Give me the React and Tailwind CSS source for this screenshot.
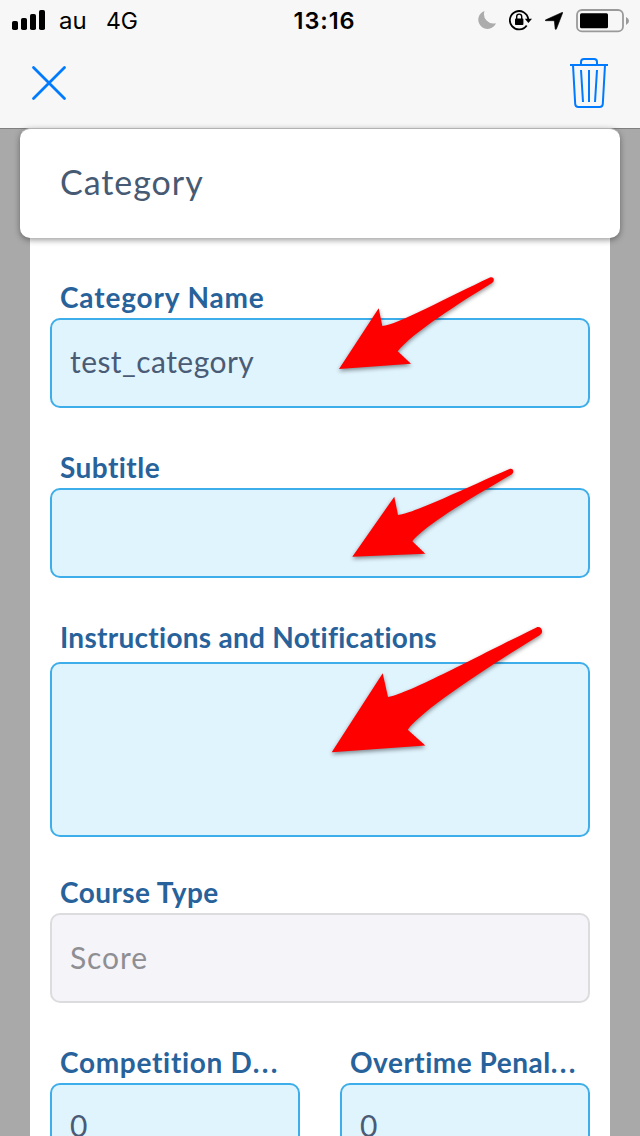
import React from "react";
import clsx from "clsx";

const ARROWS = [
  "M339 369L378.7 308.3L382.3 326C396 325.5 450 296 490 277.5C493.5 276 495.5 280.5 492 283C461 302 412 333 397.7 351.3L411 363.7Z",
  "M352.3 556.7L394.3 496.7L398 515C412 514 468 487 509.5 469C513 467.5 515 472 511.5 474.5C480 493 427 523 412.3 541.3L425.3 553.7Z",
  "M331.7 752.3L382.7 673.3L388 697C406 695 478 656 536.5 627.5C541 625.5 544.5 632 540 635C498 661 425 707 407.7 729.7L425.3 745.5Z",
];

function StatusBar() {
  return (
    <div className="flex h-10 items-center pl-3 pr-[10px] text-black font-['Inter',sans-serif]">
      <div className="flex flex-1 items-center">
        <svg className="block" width="34" height="20" viewBox="0 0 34 20">
          <rect x="0" y="11" width="6" height="9" rx="1.8" />
          <rect x="9" y="8" width="6" height="12" rx="1.8" />
          <rect x="18" y="4" width="6" height="16" rx="1.8" />
          <rect x="27" y="0" width="6" height="20" rx="1.8" />
        </svg>
        <span className="ml-[13px] w-[47px] pt-px text-[24px] leading-10">au</span>
        <span className="pt-px text-[23px] leading-10 tracking-[-0.2px]">4G</span>
      </div>
      <div className="pt-px pl-[7px] text-[23.5px] leading-10 font-semibold tracking-[0.9px]">13:16</div>
      <div className="flex flex-1 items-center justify-end">
        {/* do not disturb */}
        <svg className="mr-[13px]" width="18" height="18" viewBox="0 0 18 18">
          <path d="M6.5 0A9.2 9.2 0 1 0 18 12.2A9.5 9.5 0 0 1 6.5 0Z" fill="#acacac" />
        </svg>
        {/* rotation lock */}
        <svg className="mr-[13px]" width="23" height="22" viewBox="0 0 23 22">
          <path d="M17.7 16.4A9.2 9.2 0 1 1 19.2 10" fill="none" stroke="#000" strokeWidth="1.8" />
          <path d="M15.8 9.8H23L19.4 14Z" />
          <rect x="6" y="9.6" width="8.4" height="6.4" rx="0.8" />
          <path d="M7.7 10V7.6a2.5 2.5 0 0 1 5 0V10" fill="none" stroke="#000" strokeWidth="1.4" />
        </svg>
        {/* location */}
        <svg className="mr-[13px] mt-[2px]" width="18" height="18" viewBox="0 0 18 18">
          <path
            d="M17.1 0.4Q18 0 17.6 1L11.4 17Q10.7 18.2 10.2 17L9.4 9.6Q9.3 8.8 8.5 8.7L0.8 8.7Q-0.4 8.5 0.8 7.8Z"
            stroke="#000"
            strokeWidth="0.6"
          />
        </svg>
        {/* battery */}
        <svg className="mt-px" width="54" height="24" viewBox="0 0 54 24">
          <rect x="1" y="1" width="46" height="21.4" rx="5" fill="none" stroke="#9a9a9a" strokeWidth="1.8" />
          <rect x="4" y="4.2" width="28" height="15" rx="1.5" />
          <path d="M50 8Q53 9.5 53 12T50 16Z" fill="#9a9a9a" />
        </svg>
      </div>
    </div>
  );
}

function NavBar() {
  return (
    <div className="flex h-[88px] items-center justify-between pl-[31px] pr-8">
      <svg className="-mt-[2px]" width="36" height="36" viewBox="0 0 36 36">
        <path d="M2.5 2.5L33.5 33.5M33.5 2.5L2.5 33.5" stroke="#007aff" strokeWidth="2.8" strokeLinecap="round" />
      </svg>
      <svg className="-mt-1" width="38" height="52" viewBox="0 0 38 52" fill="none" stroke="#007aff" strokeWidth="2">
        <path d="M0 9H38" />
        <path d="M11 9V6Q11 3 14 3H24Q27 3 27 6V9" />
        <path d="M3 9L5.2 48Q5.4 51 8.5 51H29.5Q32.6 51 32.8 48L35 9" />
        <path d="M11 14L13 46M19 14V46M27 14L25 46" />
      </svg>
    </div>
  );
}

function Field({ label, value, labelClass, valueClass, className, disabled }) {
  return (
    <div className="min-w-0">
      <div
        className={clsx(
          "h-10 whitespace-nowrap pl-[10px] text-[28px] leading-[38px] font-bold text-[#28629b]",
          labelClass
        )}
      >
        {label}
      </div>
      <div
        className={clsx(
          "rounded-[10px] border-2 px-[18px] text-[30px]",
          disabled ? "border-[#dcdcdf] bg-[#f4f4f9] text-[#8e8e93]" : "border-[#3daee9] bg-[#e0f4fe] text-[#4a5b75]",
          valueClass,
          className || "h-[90px]"
        )}
      >
        {value}
      </div>
    </div>
  );
}

export default function App() {
  return (
    <div className="relative h-[1136px] w-[640px] overflow-hidden bg-[#a9a9a9] font-['Lato',sans-serif]">
      <header className="h-[129px] border-b border-[#808080] bg-[#f7f7f7]">
        <StatusBar />
        <NavBar />
      </header>

      <div className="relative z-10 mx-5 -mt-px flex h-[110px] items-center rounded-[10px] border-t border-[#b2b2b2] bg-white pl-10 pb-[3px] shadow-[0_2px_6px_rgba(0,0,0,0.4)]">
        <h1 className="text-[34px] leading-[40px] tracking-[0.95px] text-[#475a73]">Category</h1>
      </div>

      <main className="mx-[30px] flex h-[960px] flex-col gap-10 bg-white px-5 pt-10">
        <Field
          label="Category Name"
          value="test_category"
          labelClass="tracking-[0.85px]"
          valueClass="leading-[83px] tracking-[0.45px]"
        />
        <Field label="Subtitle" labelClass="tracking-[0.45px]" />
        <Field label="Instructions and Notifications" labelClass="tracking-[0.28px]" className="mt-1 h-[175px]" />
        <div className="-mt-1">
          <Field
            label="Course Type"
            value="Score"
            labelClass="tracking-[0.45px]"
            valueClass="leading-[84px] tracking-[0.9px]"
            disabled
          />
        </div>
        <div className="grid grid-cols-2 gap-10">
          <Field
            label={<>Competition D<span className="tracking-[2.4px]">...</span></>}
            value="0"
            labelClass="tracking-[0.7px]"
            valueClass="leading-[81px]"
          />
          <Field
            label={<>Overtime Penal<span className="tracking-[2.4px]">...</span></>}
            value="0"
            labelClass="tracking-[0.5px]"
            valueClass="leading-[81px]"
          />
        </div>
      </main>

      {/* pointers over the editable fields */}
      <svg
        className="pointer-events-none absolute inset-0 z-20 drop-shadow-[0_2px_2px_rgba(0,0,0,0.45)]"
        width="640"
        height="1136"
        viewBox="0 0 640 1136"
        fill="#ff0000"
      >
        {ARROWS.map((d) => (
          <path key={d} d={d} />
        ))}
      </svg>
    </div>
  );
}
